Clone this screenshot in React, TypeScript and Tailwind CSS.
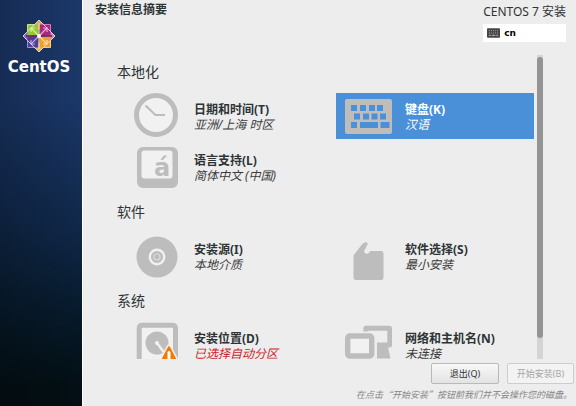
import { useState } from 'react';
import type { ReactNode } from 'react';

const icons: Record<string, ReactNode> = {
  clock: (
    <>
      <circle cx="23" cy="22" r="19.5" fill="#f1f1f1" stroke="#bdbdbd" strokeWidth="5" />
      <path d="M12.5 12.5L22.5 22H32" fill="none" stroke="#bdbdbd" strokeWidth="2.2" />
    </>
  ),
  language: (
    <>
      <rect x="4" y="3" width="41" height="41" rx="6" fill="#bdbdbd" />
      <rect x="8.5" y="6.5" width="31" height="28" rx="3" fill="#f1f1f1" />
      <text x="21" y="31.5" fontSize="24" fontWeight="bold" fontFamily="DejaVu Sans, sans-serif" fill="#bdbdbd">á</text>
    </>
  ),
  keyboard: (
    <>
      <rect x="1" y="6" width="47" height="35" rx="2" fill="#bebdb9" />
      <g fill="#4a90d9">
        <rect x="7" y="12" width="6" height="6" />
        <rect x="16" y="12" width="6" height="6" />
        <rect x="25" y="12" width="6" height="6" />
        <rect x="33" y="12" width="6" height="6" />
        <rect x="10" y="20.5" width="6" height="6" />
        <rect x="19" y="20.5" width="6" height="6" />
        <rect x="27.5" y="20.5" width="6" height="6" />
        <rect x="36" y="20.5" width="6" height="6" />
        <rect x="7" y="29" width="6" height="6" />
        <rect x="16" y="29" width="18" height="6" />
        <rect x="36.5" y="29" width="9" height="6" />
      </g>
    </>
  ),
  disc: (
    <>
      <circle cx="24" cy="24" r="20.5" fill="#bdbdbd" />
      <circle cx="24" cy="24" r="7.2" fill="none" stroke="#f1f1f1" strokeWidth="2.4" />
      <circle cx="24" cy="24" r="3" fill="none" stroke="#dcdcdc" strokeWidth="1.2" />
    </>
  ),
  package: (
    <path
      d="M9.5 22.5L17.5 12Q20 8.5 23 9.5Q24.4 10.8 22.8 12.8L20 18.5Q21 21.8 24.2 20.4L26.5 18H37Q39.5 18 39.5 21V44.5Q39.5 47 37 47H12Q9.5 47 9.5 44.5Z"
      fill="#bdbdbd"
    />
  ),
  drive: (
    <>
      <path d="M6.2 46V6.5Q6.2 3.2 9.5 3.2H39.2Q42.5 3.2 42.5 6.5V46" fill="#f1f1f1" stroke="#bdbdbd" strokeWidth="5" />
      <circle cx="24" cy="21" r="11.5" fill="#bdbdbd" />
      <path d="M24 21L33 33" stroke="#f1f1f1" strokeWidth="2.4" strokeLinecap="round" />
      <circle cx="24" cy="21" r="2" fill="#f1f1f1" />
      <path
        d="M36 25L45 42H27Z"
        fill="#f57900"
        stroke="#eeeeee"
        strokeWidth="5"
        strokeLinejoin="round"
      />
      <path d="M36 25.5L44.5 42H27.5Z" fill="#f57900" stroke="#f57900" strokeWidth="2.4" strokeLinejoin="round" />
      <path d="M36 30.5V38" stroke="#fff" strokeWidth="3" strokeLinecap="round" />
    </>
  ),
  network: (
    <>
      <path
        d="M19.3 9.5V6.5Q19.3 3.7 22 3.7H45Q48 3.7 48 6.5V23.5Q48 25.5 46 25.5H44L46.5 36.5H33V20.5H43.3V8.7H24V9.5Z"
        fill="#bdbdbd"
      />
      <rect x="3.7" y="14" width="24" height="20" rx="2" fill="#f1f1f1" stroke="#bdbdbd" strokeWidth="5.4" />
    </>
  ),
};

interface Spoke {
  id: string;
  title: string;
  status: string;
  icon: string;
  warning?: boolean;
}

const sections: { title: string; spokes: Spoke[] }[] = [
  {
    title: '本地化',
    spokes: [
      { id: 'datetime', title: '日期和时间(T)', status: '亚洲/上海 时区', icon: 'clock' },
      { id: 'keyboard', title: '键盘(K)', status: '汉语', icon: 'keyboard' },
      { id: 'language', title: '语言支持(L)', status: '简体中文 (中国)', icon: 'language' },
    ],
  },
  {
    title: '软件',
    spokes: [
      { id: 'source', title: '安装源(I)', status: '本地介质', icon: 'disc' },
      { id: 'software', title: '软件选择(S)', status: '最小安装', icon: 'package' },
    ],
  },
  {
    title: '系统',
    spokes: [
      { id: 'storage', title: '安装位置(D)', status: '已选择自动分区', icon: 'drive', warning: true },
      { id: 'network', title: '网络和主机名(N)', status: '未连接', icon: 'network' },
    ],
  },
];

function CentosLogo() {
  return (
    <svg width="34" height="34" viewBox="0 0 34 34" aria-hidden="true">
      <path d="M17 1L22 6L17 11L12 6Z" fill="#d9a25a" />
      <path d="M33 17L28 22L23 17L28 12Z" fill="#d88a9c" />
      <path d="M17 33L12 28L17 23L22 28Z" fill="#e0b25c" />
      <path d="M1 17L6 12L11 17L6 22Z" fill="#8e68b4" />
      <rect x="5.5" y="5.5" width="11" height="11" fill="#95c93a" />
      <rect x="17.5" y="5.5" width="11" height="11" fill="#a8267f" />
      <rect x="5.5" y="17.5" width="11" height="11" fill="#4f3f96" />
      <rect x="17.5" y="17.5" width="11" height="11" fill="#f0a02c" />
      {/* Arrow heads inside each quarter */}
      <g fill="none" strokeWidth="1.2">
        <path d="M9 13V9H13M9 9L16 16" stroke="#d9eda0" />
        <path d="M21 9H25V13M25 9L18 16" stroke="#e9a9d2" />
        <path d="M9 21V25H13M9 25L16 18" stroke="#b7a9e0" />
        <path d="M21 25H25V21M25 25L18 18" stroke="#fbe0a0" />
      </g>
      <path d="M5.5 12V5.5H12" fill="none" stroke="#c6e58a" />
      <path d="M22 5.5H28.5V12" fill="none" stroke="#d978b8" />
      <path d="M12 28.5H5.5V22" fill="none" stroke="#9a8fd6" />
      <path d="M28.5 22V28.5H22" fill="none" stroke="#fbcf7c" />
      <path d="M17 1L33 17L17 33L1 17Z" fill="none" stroke="#ecdde6" strokeWidth="0.9" />
      <path d="M17 4V30" stroke="#f2d7b4" strokeWidth="1.2" />
      <path d="M4 17H30" stroke="#6c2f6e" strokeWidth="1.8" />
      <circle cx="17" cy="17" r="2" fill="#fff" />
    </svg>
  );
}

function KeyboardGlyph() {
  return (
    <svg width="13" height="10" viewBox="0 0 14 10" aria-hidden="true">
      <rect width="14" height="10" rx="1" fill="#454545" />
      <path d="M2 2.5H12M2 5H12" stroke="#a4a4a4" strokeWidth="1" strokeDasharray="1.2 1" />
      <path d="M2 7.5H4M5 7.5H9M10 7.5H12" stroke="#c4c4c4" strokeWidth="1" />
    </svg>
  );
}

function SpokeButton({ spoke, selected, onSelect }: { spoke: Spoke; selected: boolean; onSelect: () => void }) {
  const statusColor = selected ? 'text-white' : spoke.warning ? 'text-[#cc1f2f]' : 'text-[#3c3c3c]';

  return (
    <button
      type="button"
      onClick={onSelect}
      className={`flex h-[46px] items-start gap-[13px] pl-2 text-left ${
        selected ? 'bg-[#4a90d9] text-white' : 'text-[#2e3436]'
      }`}
    >
      <svg className="shrink-0 overflow-visible" width="48" height="46" viewBox="0 0 48 46" aria-hidden="true">
        {icons[spoke.icon]}
      </svg>
      <span className="flex flex-col pt-[9px] text-xs leading-[15px] whitespace-nowrap">
        <span className="font-bold">{spoke.title}</span>
        <span className={`italic ${statusColor}`}>{spoke.status}</span>
      </span>
    </button>
  );
}

export default function App() {
  const [selectedId, setSelectedId] = useState('keyboard');

  return (
    <div className="flex h-screen bg-[#ededed] font-['Noto_Sans','Noto_Sans_CJK_SC',sans-serif] text-[#2e3436]">
      <aside className="w-[82px] shrink-0 bg-linear-to-b from-[#1b3769] from-25% via-[#10284a] via-55% to-[#030f14] to-95%">
        <div className="flex h-full flex-col items-center bg-linear-to-r from-black/20 to-transparent pt-[19px] pr-1">
          <CentosLogo />
          <span className="mt-1 font-['DejaVu_Sans',sans-serif] text-[15px] leading-5 font-bold text-white">CentOS</span>
        </div>
      </aside>

      <main className="flex min-w-0 flex-1 flex-col border-l border-white">
        <header className="flex items-start justify-between pr-2.5 pb-[13px] pl-3">
          <h1 className="text-xs leading-5 font-bold">安装信息摘要</h1>
          <div className="flex flex-col">
            <span className="text-xs leading-6 whitespace-nowrap">CENTOS 7 安装</span>
            <button type="button" className="flex h-[18px] items-center gap-1 bg-white px-1">
              <KeyboardGlyph />
              <span className="font-['DejaVu_Sans',sans-serif] text-[9px] leading-4 font-bold text-black">cn</span>
            </button>
          </div>
        </header>

        <div className="flex min-h-0 flex-1 gap-[3px] pr-[33px] pl-[34px]">
          <div className="flex min-w-0 flex-1 flex-col gap-3 overflow-hidden pt-[7px]">
            {sections.map((section) => (
              <section key={section.title}>
                <h2 className="mb-[11px] text-sm leading-5">{section.title}</h2>
                <div className="ml-2 grid grid-cols-2 gap-x-[13px] gap-y-[5px]">
                  {section.spokes.map((spoke) => (
                    <SpokeButton
                      key={spoke.id}
                      spoke={spoke}
                      selected={spoke.id === selectedId}
                      onSelect={() => setSelectedId(spoke.id)}
                    />
                  ))}
                </div>
              </section>
            ))}
          </div>
          {/* Scrollbar */}
          <div className="flex w-[6px] flex-col bg-[#d4d4d4] pt-0.5">
            <div className="h-[93%] rounded-full bg-[#949494]" />
          </div>
        </div>

        <footer className="flex flex-col items-end pt-1 pr-0.5 pb-0.5">
          <div className="flex gap-2 text-[9px] leading-[19px]">
            <button
              type="button"
              className="w-[68px] rounded-xs border border-[#b9b9b9] bg-linear-to-b from-[#f8f8f8] to-[#e3e3e3]"
            >
              退出(Q)
            </button>
            <button type="button" disabled className="w-[67px] rounded-xs border border-[#cdcdcd] bg-[#f3f3f3] text-[#a5a5a5]">
              开始安装(B)
            </button>
          </div>
          <p className="pt-0.5 pr-0.5 font-['Noto_Sans_CJK_SC',sans-serif] text-[9px] leading-[18px] text-[#858585] italic">
            在点击“开始安装”按钮前我们并不会操作您的磁盘。
          </p>
        </footer>
      </main>
    </div>
  );
}
